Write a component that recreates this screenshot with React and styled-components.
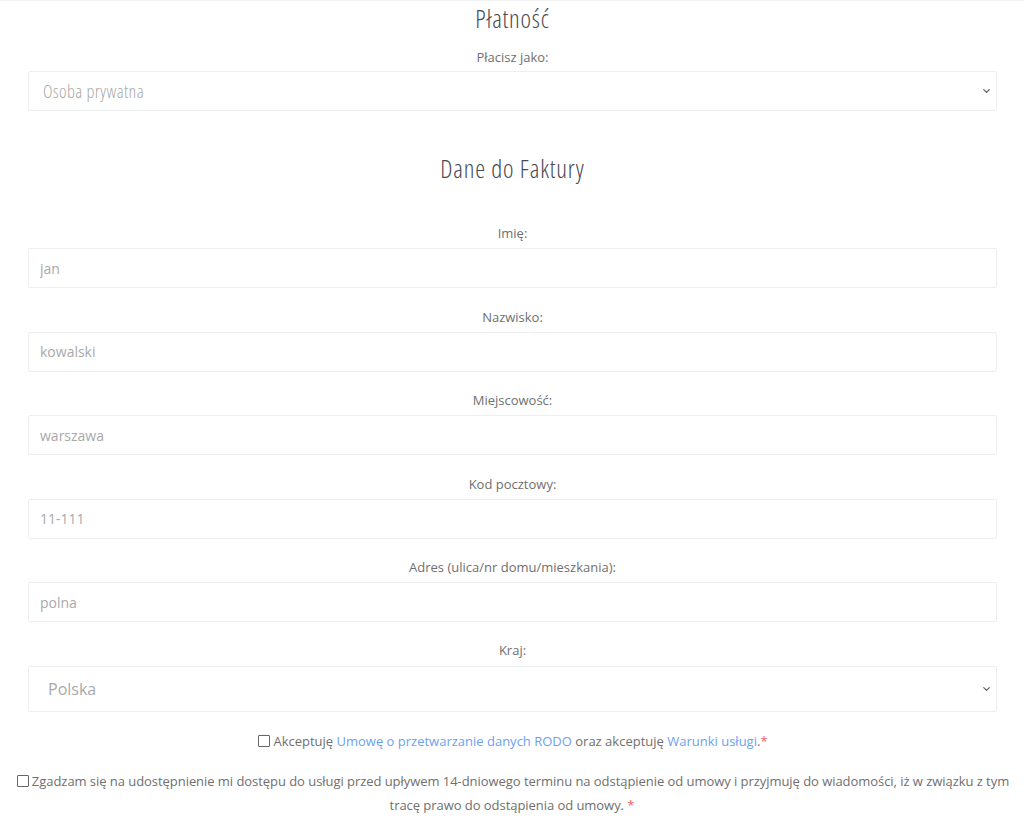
import React from "react";
import styled, { createGlobalStyle } from "styled-components";
import { ChevronDown } from "lucide-react";

const Global = createGlobalStyle`
  html, body { margin: 0; padding: 0; background: #fff; }
  body { font-family: "Open Sans", "Liberation Sans", sans-serif; color: #666; }
  * { box-sizing: border-box; }
`;

const Page = styled.div`
  border-top: 1px solid #f2f2f2;
  width: 1024px;
`;

const Form = styled.div`
  padding: 0 27px 0 28px;
`;

const Heading = styled.h2`
  margin: 0;
  font-family: "Open Sans", sans-serif;
  font-stretch: 80%;
  font-weight: 300;
  font-size: 25px;
  letter-spacing: 0.8px;
  line-height: 34px;
  color: #464a52;
  text-align: center;
  margin-top: ${(p) => p.$top || 0}px;
`;

const Field = styled.div`
  display: flex;
  flex-direction: column;
  margin-top: ${(p) => p.$top ?? 18}px;
`;

const Label = styled.label`
  display: block;
  text-align: center;
  font-size: 13px;
  line-height: 20px;
  color: #6f6f6f;
  margin-bottom: ${(p) => p.$gap ?? 5}px;
`;

const Input = styled.input`
  width: 100%;
  height: 40px;
  border: 1px solid #eceef2;
  border-radius: 2px;
  padding: 0 11px;
  font-family: "Open Sans", sans-serif;
  font-size: 14px;
  color: #a9a9a9;
  background: #fff;
  outline: none;
`;

const SelectWrap = styled.div`
  position: relative;
  width: 100%;
`;

const Select = styled.select`
  appearance: none;
  -webkit-appearance: none;
  width: 100%;
  height: ${(p) => p.$h || 40}px;
  border: 1px solid #eceef2;
  border-radius: 2px;
  padding: 0 ${(p) => (p.$big ? 19 : 14)}px;
  font-family: "Open Sans", sans-serif;
  font-stretch: ${(p) => (p.$condensed ? "80%" : "100%")};
  font-weight: ${(p) => (p.$condensed ? 300 : 400)};
  font-size: ${(p) => (p.$condensed ? 18 : 16)}px;
  letter-spacing: ${(p) => (p.$condensed ? "0.4px" : "0")};
  color: #a9a9a9;
  background: #fff;
  outline: none;
`;

const Chevron = styled.span`
  position: absolute;
  right: 5px;
  top: 50%;
  transform: translateY(-50%);
  display: flex;
  color: #6a6a6a;
  pointer-events: none;
`;

const Consent = styled.div`
  text-align: center;
  font-size: 13px;
  line-height: 24px;
  color: #6f6f6f;
  letter-spacing: ${(p) => (p.$wide ? "-0.05px" : "0")};
  margin-top: ${(p) => p.$top}px;
  padding: ${(p) => (p.$wide ? "0 4px" : "0")};
`;

const Box = styled.input`
  appearance: none;
  -webkit-appearance: none;
  width: 12px;
  height: 12px;
  margin: 0 3px -1px 2px;
  border: 1px solid #666;
  border-radius: 1px;
  background: #fff;
  vertical-align: 0;
`;

const Link = styled.a`
  color: #6c9ff2;
  text-decoration: none;
`;

const Req = styled.span`
  color: #f0606a;
`;

function SelectField({ value, options, h, big, condensed }) {
  return (
    <SelectWrap>
      <Select defaultValue={value} $h={h} $big={big} $condensed={condensed}>
        {options.map((o) => (
          <option key={o}>{o}</option>
        ))}
      </Select>
      <Chevron>
        <ChevronDown size={11} strokeWidth={3} />
      </Chevron>
    </SelectWrap>
  );
}

const fields = [
  ["Imię:", "jan"],
  ["Nazwisko:", "kowalski"],
  ["Miejscowość:", "warszawa"],
  ["Kod pocztowy:", "11-111"],
  ["Adres (ulica/nr domu/mieszkania):", "polna"],
];

export default function App() {
  return (
    <Page>
      <Global />
      <Form>
        <Heading>Płatność</Heading>
        <Field $top={12}>
          <Label $gap={4}>Płacisz jako:</Label>
          <SelectField value="Osoba prywatna" options={["Osoba prywatna", "Firma"]} condensed />
        </Field>
        <Heading $top={40}>Dane do Faktury</Heading>
        {fields.map(([l, v], i) => (
          <Field key={l} $top={i === 0 ? 38 : 18.6}>
            <Label>{l}</Label>
            <Input defaultValue={v} />
          </Field>
        ))}
        <Field $top={18}>
          <Label $gap={6}>Kraj:</Label>
          <SelectField value="Polska" options={["Polska", "Niemcy", "Czechy"]} h={46} big />
        </Field>
      </Form>
      <Consent $top={17}>
        <Box type="checkbox" />
        Akceptuję <Link href="#">Umowę o przetwarzanie danych RODO</Link> oraz akceptuję{" "}
        <Link href="#">Warunki usługi</Link>.<Req>*</Req>
      </Consent>
      <Consent $top={16} $wide>
        <Box type="checkbox" />
        Zgadzam się na udostępnienie mi dostępu do usługi przed upływem 14-dniowego terminu na
        odstąpienie od umowy i przyjmuję do wiadomości, iż w związku z tym tracę prawo do
        odstąpienia od umowy. <Req>*</Req>
      </Consent>
    </Page>
  );
}
